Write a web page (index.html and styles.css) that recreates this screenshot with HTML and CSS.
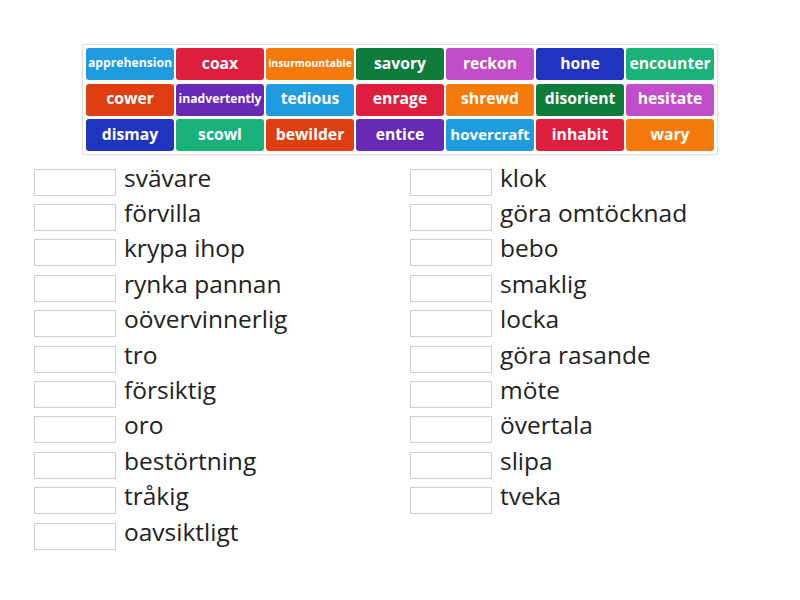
FILE: index.html
```html
<!DOCTYPE html>
<html>
<head>
<meta charset="utf-8">
<link rel="stylesheet" href="styles.css">
</head>
<body>
<div class="page">
  <div class="bank">
    <div class="tile blue fit-m">apprehension</div>
    <div class="tile red">coax</div>
    <div class="tile orange fit-s">insurmountable</div>
    <div class="tile green">savory</div>
    <div class="tile pink">reckon</div>
    <div class="tile navy">hone</div>
    <div class="tile teal">encounter</div>

    <div class="tile vermilion">cower</div>
    <div class="tile purple fit-m">inadvertently</div>
    <div class="tile blue">tedious</div>
    <div class="tile red">enrage</div>
    <div class="tile orange">shrewd</div>
    <div class="tile green">disorient</div>
    <div class="tile pink">hesitate</div>

    <div class="tile navy">dismay</div>
    <div class="tile teal">scowl</div>
    <div class="tile vermilion">bewilder</div>
    <div class="tile purple">entice</div>
    <div class="tile blue fit-l">hovercraft</div>
    <div class="tile red">inhabit</div>
    <div class="tile orange">wary</div>
  </div>

  <div class="lists">
    <ul class="column">
      <li class="row"><span class="slot"></span><span class="label">svävare</span></li>
      <li class="row"><span class="slot"></span><span class="label">förvilla</span></li>
      <li class="row"><span class="slot"></span><span class="label">krypa ihop</span></li>
      <li class="row"><span class="slot"></span><span class="label">rynka pannan</span></li>
      <li class="row"><span class="slot"></span><span class="label">oövervinnerlig</span></li>
      <li class="row"><span class="slot"></span><span class="label">tro</span></li>
      <li class="row"><span class="slot"></span><span class="label">försiktig</span></li>
      <li class="row"><span class="slot"></span><span class="label">oro</span></li>
      <li class="row"><span class="slot"></span><span class="label">bestörtning</span></li>
      <li class="row"><span class="slot"></span><span class="label">tråkig</span></li>
      <li class="row"><span class="slot"></span><span class="label">oavsiktligt</span></li>
    </ul>
    <ul class="column">
      <li class="row"><span class="slot"></span><span class="label">klok</span></li>
      <li class="row"><span class="slot"></span><span class="label">göra omtöcknad</span></li>
      <li class="row"><span class="slot"></span><span class="label">bebo</span></li>
      <li class="row"><span class="slot"></span><span class="label">smaklig</span></li>
      <li class="row"><span class="slot"></span><span class="label">locka</span></li>
      <li class="row"><span class="slot"></span><span class="label">göra rasande</span></li>
      <li class="row"><span class="slot"></span><span class="label">möte</span></li>
      <li class="row"><span class="slot"></span><span class="label">övertala</span></li>
      <li class="row"><span class="slot"></span><span class="label">slipa</span></li>
      <li class="row"><span class="slot"></span><span class="label">tveka</span></li>
    </ul>
  </div>
</div>
</body>
</html>
```
FILE: styles.css
```css
* { box-sizing: border-box; }
html, body { margin: 0; padding: 0; background: #fff; }
body { font-family: "Open Sans", "DejaVu Sans", sans-serif; color: #222; }

.page { width: 800px; height: 600px; padding-top: 44px; }

.bank {
  margin-left: 82px;
  width: 636px;
  padding: 3px 3px 3px 3px;
  border: 1px solid #dcdcdc;
  border-radius: 2px;
  box-shadow: 0 0 2px rgba(0,0,0,0.08);
  display: grid;
  grid-template-columns: repeat(7, 88px);
  grid-auto-rows: 32px;
  column-gap: 2px;
  row-gap: 3.5px;
}

.tile {
  border-radius: 3px;
  color: #fff;
  font-weight: 700;
  font-size: 15.7px;
  display: flex;
  align-items: center;
  justify-content: center;
  white-space: nowrap;
  overflow: hidden;
  padding-bottom: 3px;
}
.fit-m { font-size: 12.2px; }
.fit-s { font-size: 10.4px; }
.fit-l { font-size: 15px; }

.blue { background: #1f9ce0; }
.red { background: #de1e3d; }
.orange { background: #f47b0b; }
.green { background: #0f7c3b; }
.pink { background: #c24dc8; }
.navy { background: #1f35bf; }
.teal { background: #1bb17b; }
.vermilion { background: #df3f10; }
.purple { background: #672ab7; }

.lists {
  display: grid;
  grid-template-columns: 376px 376px;
  padding-left: 34px;
  margin-top: 9.5px;
}
.column { list-style: none; margin: 0; padding: 0; }
.row {
  height: 35.42px;
  display: flex;
  align-items: flex-start;
}
.slot {
  width: 82px;
  height: 27px;
  margin-top: 4px;
  border: 1px solid #cfcfcf;
  background: #fff;
  flex: none;
}
.label {
  margin-left: 8px;
  font-size: 24.5px;
  line-height: 25px;
  color: #222;
  white-space: nowrap;
}
```
